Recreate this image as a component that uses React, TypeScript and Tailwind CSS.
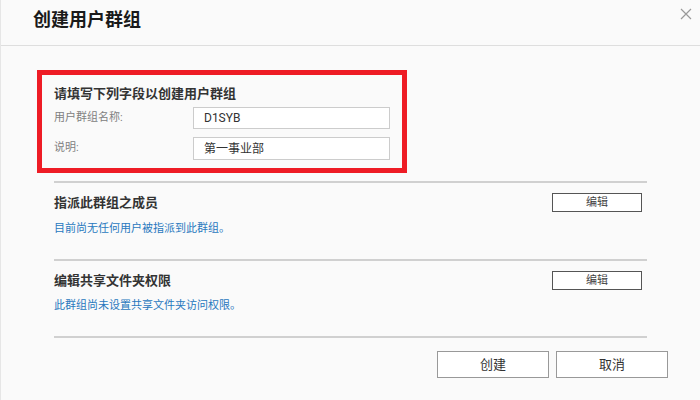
import React from 'react';

const font = { fontFamily: 'Roboto, "Noto Sans CJK SC", sans-serif' };

const Section: React.FC<{ title: string; note: string }> = ({ title, note }) => (
  <div className="border-t-2 border-[#d0d0d0] pt-[10px] pb-[22px]">
    <div className="flex items-center justify-between pr-[5px]">
      <span className="text-[13px] font-bold text-[#333]">{title}</span>
      <button className="w-[90px] h-[19px] bg-white border border-[#555] text-[11px] leading-none text-[#444]">
        编辑
      </button>
    </div>
    <p className="mt-[8px] text-[11px] leading-[16px] text-[#2878be]">{note}</p>
  </div>
);

export default function App() {
  return (
    <div className="w-[700px] h-[400px] bg-[#fafafa] border-l border-[#e6e6e6] overflow-hidden" style={font}>
      {/* Header */}
      <div className="h-[46px] flex items-start justify-between border-b border-[#dedede] pl-[32px] pr-[8px]">
        <h1 className="mt-[8px] text-[18px] leading-[24px] font-bold text-[#1a1a1a]">创建用户群组</h1>
        <svg className="mt-[8px]" width="12" height="12" viewBox="0 0 12 12">
          <path d="M1 1 L11 11 M11 1 L1 11" stroke="#9a9a9a" strokeWidth="1.2" />
        </svg>
      </div>

      {/* Form (highlighted) */}
      <div className="ml-[36px] mt-[24px] w-[370px] border-[5px] border-[#ee1c25] pl-[12px] pr-[12px] pt-[10px] pb-[8px]">
        <p className="text-[13px] leading-[17px] font-bold text-[#333]">请填写下列字段以创建用户群组</p>
        <div className="mt-[5px] flex flex-col gap-[8px]">
          <div className="flex items-center justify-between">
            <span className="text-[11px] text-[#808080]">用户群组名称:</span>
            <div className="w-[197px] h-[22px] bg-white border border-[#cccccc] flex items-center pl-[10px] text-[12px] text-[#333]">
              D1SYB
            </div>
          </div>
          <div className="flex items-center justify-between">
            <span className="text-[11px] text-[#808080]">说明:</span>
            <div className="w-[197px] h-[23px] bg-white border border-[#cccccc] flex items-center pl-[10px] text-[12px] text-[#333]">
              第一事业部
            </div>
          </div>
        </div>
      </div>

      {/* Sections */}
      <div className="ml-[53px] w-[593px] mt-[8px]">
        <Section title="指派此群组之成员" note="目前尚无任何用户被指派到此群组。" />
        <Section title="编辑共享文件夹权限" note="此群组尚未设置共享文件夹访问权限。" />
        <div className="border-t-2 border-[#d0d0d0]" />
      </div>

      {/* Footer */}
      <div className="mt-[13px] flex justify-end gap-[7px] pr-[32px]">
        <button className="w-[112px] h-[27px] bg-white border border-[#999] text-[13px] text-[#333]">创建</button>
        <button className="w-[112px] h-[27px] bg-white border border-[#999] text-[13px] text-[#333]">取消</button>
      </div>
    </div>
  );
}
